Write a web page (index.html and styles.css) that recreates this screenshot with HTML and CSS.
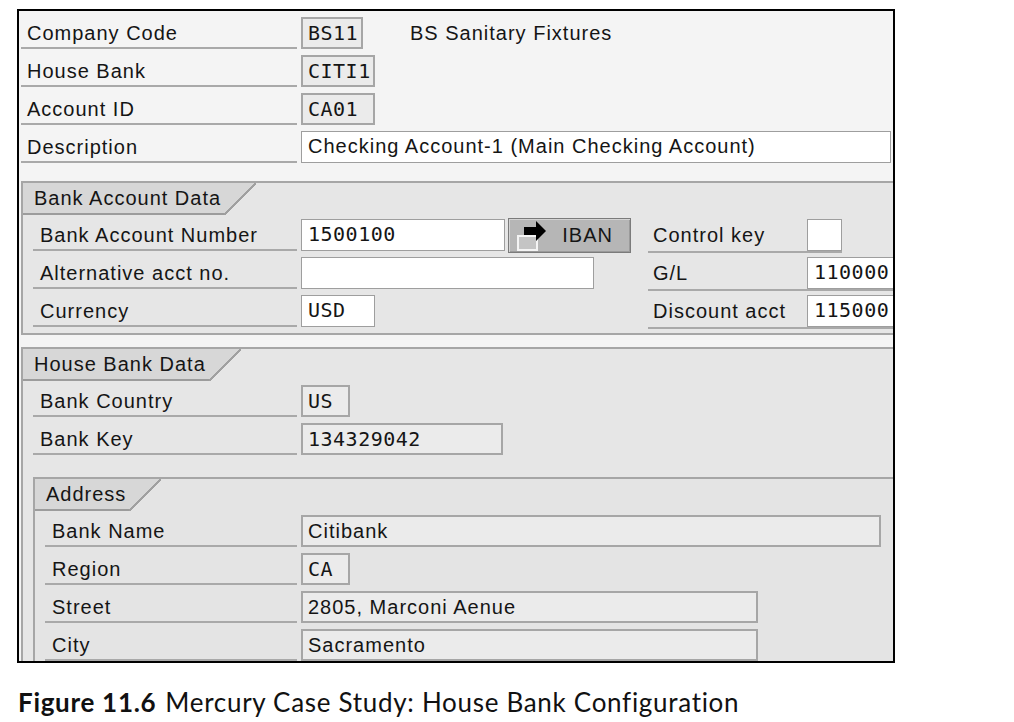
FILE: index.html
```html
<!DOCTYPE html>
<html lang="en">
<head>
    <meta charset="UTF-8">
    <title>House Bank Configuration</title>
    <link rel="stylesheet" href="styles.css">
</head>
<body>
    <div class="screen">
        <div class="head">
            <div class="row">
                <span class="lbl">Company Code</span>
                <span class="fld mono w62">BS11</span>
                <span class="note">BS Sanitary Fixtures</span>
            </div>
            <div class="row">
                <span class="lbl">House Bank</span>
                <span class="fld mono w74">CITI1</span>
            </div>
            <div class="row">
                <span class="lbl">Account ID</span>
                <span class="fld mono w74">CA01</span>
            </div>
            <div class="row">
                <span class="lbl">Description</span>
                <span class="fld in w590">Checking Account-1 (Main Checking Account)</span>
            </div>
        </div>

        <div class="sec bank">
            <div class="tab">Bank Account Data</div>
            <div class="row">
                <div class="left">
                    <span class="lbl">Bank Account Number</span>
                    <span class="fld in mono w204">1500100</span>
                    <button class="iban" type="button">
                        <svg width="36" height="32" viewBox="0 0 36 32">
                            <rect x="7" y="17" width="19" height="14" fill="#c4c4c4" stroke="#f4f4f4" stroke-width="2"/>
                            <rect x="13" y="8" width="13" height="8" fill="#000"/>
                            <polygon points="25,2 35,12 25,22" fill="#000"/>
                        </svg>
                        <span>IBAN</span>
                    </button>
                </div>
                <div class="pair">
                    <span class="plbl">Control key</span>
                    <span class="fld in w35"></span>
                </div>
            </div>
            <div class="row">
                <div class="left">
                    <span class="lbl">Alternative acct no.</span>
                    <span class="fld in w293"></span>
                </div>
                <div class="pair">
                    <span class="plbl">G/L</span>
                    <span class="fld in mono w90">110000</span>
                </div>
            </div>
            <div class="row">
                <div class="left">
                    <span class="lbl">Currency</span>
                    <span class="fld in mono w74">USD</span>
                </div>
                <div class="pair">
                    <span class="plbl">Discount acct</span>
                    <span class="fld in mono w90">115000</span>
                </div>
            </div>
        </div>

        <div class="sec house">
            <div class="tab">House Bank Data</div>
            <div class="row">
                <span class="lbl">Bank Country</span>
                <span class="fld mono w49">US</span>
            </div>
            <div class="row">
                <span class="lbl">Bank Key</span>
                <span class="fld mono w202">134329042</span>
            </div>

            <div class="sec addr">
                <div class="tab">Address</div>
                <div class="row">
                    <span class="lbl">Bank Name</span>
                    <span class="fld w580">Citibank</span>
                </div>
                <div class="row">
                    <span class="lbl">Region</span>
                    <span class="fld mono w49">CA</span>
                </div>
                <div class="row">
                    <span class="lbl">Street</span>
                    <span class="fld w457">2805, Marconi Aenue</span>
                </div>
                <div class="row">
                    <span class="lbl">City</span>
                    <span class="fld w457">Sacramento</span>
                </div>
            </div>
        </div>
    </div>

    <p class="caption"><b>Figure 11.6</b>Mercury Case Study: House Bank Configuration</p>
</body>
</html>
```

FILE: styles.css
```css
html, body {
    margin: 0;
    padding: 0;
    background: #fff;
}

body {
    padding: 9px 0 0 17px;
}

/* SAP-style screen frame */
.screen {
    box-sizing: border-box;
    width: 878px;
    height: 654px;
    border: 2px solid #000;
    background: #f4f4f4;
    overflow: hidden;
    font-family: "Liberation Sans", Arial, sans-serif;
    font-size: 20px;
    letter-spacing: 1px;
    color: #151515;
}

.head {
    padding: 6px 0 12px 2px;
}

.row {
    display: flex;
    align-items: center;
    height: 32px;
    margin-bottom: 6px;
}

.lbl {
    box-sizing: border-box;
    flex-shrink: 0;
    height: 32px;
    line-height: 32px;
    padding-left: 6px;
    margin-right: 4px;
    border-bottom: 2px solid #a9a9a9;
    white-space: nowrap;
}

.head .lbl {
    width: 276px;
}

.sec .lbl {
    width: 264px;
    padding-left: 7px;
}

.sec .sec .lbl {
    width: 252px;
}

/* fields: grey = display only, white = input */
.fld {
    box-sizing: border-box;
    flex-shrink: 0;
    height: 32px;
    line-height: 29px;
    padding-left: 5px;
    border: 2px solid #a6a6a6;
    background: #ebebeb;
    white-space: nowrap;
    overflow: hidden;
}

.fld.in {
    background: #fff;
    border: 1px solid #9e9e9e;
    padding-left: 6px;
}

.mono {
    font-family: "DejaVu Sans Mono", monospace;
    letter-spacing: 0.5px;
}

.w35 { width: 35px; }
.w49 { width: 49px; }
.w62 { width: 62px; }
.w74 { width: 74px; }
.w90 { width: 90px; }
.w202 { width: 202px; }
.w204 { width: 204px; }
.w293 { width: 293px; }
.w457 { width: 457px; }
.w580 { width: 580px; }
.w590 { width: 590px; }

.note {
    margin-left: 47px;
    white-space: nowrap;
}

/* group boxes */
.sec {
    margin-left: 2px;
    border-top: 2px solid #a6a6a6;
    border-left: 2px solid #a6a6a6;
    background: #e6e6e6;
}

.sec .row {
    padding-left: 10px;
}

.bank {
    border-bottom: 2px solid #a6a6a6;
}

.house {
    margin-top: 12px;
}

.addr {
    margin: 22px 0 0 10px;
    background: #e4e4e4;
}

.tab {
    position: relative;
    display: inline-block;
    height: 30px;
    line-height: 30px;
    padding: 0 3px 0 11px;
    margin-bottom: 4px;
    background: #d7d7d7;
    border-bottom: 2px solid #9c9c9c;
    white-space: nowrap;
}

.tab::after {
    content: "";
    position: absolute;
    top: 0;
    right: -32px;
    width: 32px;
    height: 32px;
    background: linear-gradient(to bottom right, #d7d7d7 48%, #a0a0a0 48%, #a0a0a0 53%, transparent 53%);
}

.left {
    display: flex;
    align-items: center;
    flex-shrink: 0;
    width: 615px;
}

.pair {
    display: flex;
    align-self: flex-start;
    flex-shrink: 0;
    border-bottom: 2px solid #a9a9a9;
}

.plbl {
    width: 154px;
    padding-left: 5px;
    line-height: 32px;
    white-space: nowrap;
}

.iban {
    box-sizing: border-box;
    display: flex;
    align-items: center;
    justify-content: space-between;
    width: 123px;
    height: 35px;
    margin-left: 3px;
    padding: 0 17px 0 2px;
    background: #b6b6b6;
    border: 1px solid #7b7b7b;
    box-shadow: inset 1px 1px 0 #d4d4d4, inset -1px -1px 0 #9a9a9a;
    font: inherit;
    letter-spacing: inherit;
    color: #151515;
}

.iban svg {
    display: block;
}

.caption {
    margin: 23px 0 0 1px;
    font-family: Lato, "Noto Sans", sans-serif;
    font-size: 26px;
    letter-spacing: 0.7px;
    color: #111;
}

.caption b {
    margin-right: 9px;
}
```
